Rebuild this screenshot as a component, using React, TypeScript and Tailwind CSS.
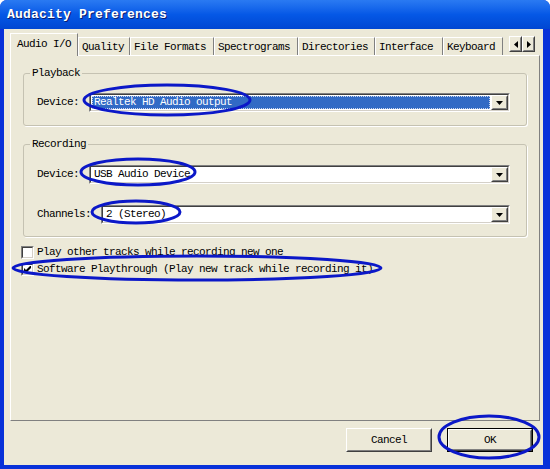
import React from "react";

const tabs = [
  { label: "Audio I/O", w: 68, active: true },
  { label: "Quality", w: 52 },
  { label: "File Formats", w: 84 },
  { label: "Spectrograms", w: 84 },
  { label: "Directories", w: 77 },
  { label: "Interface", w: 68 },
  { label: "Keyboard", w: 60 },
];

function Arrow({ dir }: { dir: "left" | "right" | "down" }) {
  if (dir === "down")
    return (
      <svg width="7" height="4" viewBox="0 0 7 4">
        <path d="M0 0h7L3.5 4z" fill="#000" />
      </svg>
    );
  return (
    <svg width="4" height="7" viewBox="0 0 4 7">
      {dir === "left" ? <path d="M4 0v7L0 3.5z" fill="#000" /> : <path d="M0 0v7l4-3.5z" fill="#000" />}
    </svg>
  );
}

function Raised({ className, children }: { className?: string; children?: React.ReactNode }) {
  return (
    <div className={`border border-t-white border-l-white border-r-[#404040] border-b-[#404040] bg-[#ECE9D8] ${className ?? ""}`}>
      <div className="w-full h-full border border-t-[#ECE9D8] border-l-[#ECE9D8] border-r-[#808080] border-b-[#808080] flex items-center justify-center">
        {children}
      </div>
    </div>
  );
}

function Combo({ value, selected }: { value: string; selected?: boolean }) {
  return (
    <div className="flex-1 h-[19px] border border-t-[#808080] border-l-[#808080] border-r-white border-b-white">
      <div className="h-full border border-t-[#404040] border-l-[#404040] border-r-[#D4D0C8] border-b-[#D4D0C8] bg-white flex items-center">
        <div className="flex-1 h-full p-px flex">
          <div
            className={
              selected
                ? "flex-1 bg-[#316AC5] text-white border border-dotted border-[#c9d6ee] flex items-center pl-px"
                : "flex-1 flex items-center pl-[2px]"
            }
          >
            {value}
          </div>
        </div>
        <Raised className="w-[17px] h-full">
          <Arrow dir="down" />
        </Raised>
      </div>
    </div>
  );
}

function CheckBox({ checked }: { checked?: boolean }) {
  return (
    <div className="w-[13px] h-[13px] border border-t-[#808080] border-l-[#808080] border-r-white border-b-white">
      <div className="w-full h-full border border-t-[#404040] border-l-[#404040] border-r-[#D4D0C8] border-b-[#D4D0C8] bg-white flex items-center justify-center">
        {checked && (
          <svg width="7" height="7" viewBox="0 0 7 7">
            <path d="M0 2v3l2 2 5-5V-1L2 4z" fill="#000" />
          </svg>
        )}
      </div>
    </div>
  );
}

export default function App() {
  return (
    <div className="relative w-[550px] h-[469px] bg-white font-['Liberation_Mono',monospace] text-[11px] tracking-[-0.6px] text-black leading-[13px]">
      <div className="w-[550px] h-[469px] flex flex-col rounded-t-[7px] overflow-hidden bg-[#0831D9]">
        {/* title bar */}
        <div className="h-[29px] flex items-center pl-[7px] bg-gradient-to-b from-[#2A7AF2] via-[#0558E6] to-[#0046D2]">
          <span className="text-white font-bold text-[13px] tracking-[0.2px] [text-shadow:1px_1px_0_#0a1e70]">
            Audacity Preferences
          </span>
        </div>

        {/* client */}
        <div className="ml-[4px] mr-[7px] h-[436px] bg-[#ECE9D8] pt-[4px] pl-[6px] pr-[3px]">
          {/* tabs */}
          <div className="h-[22px] flex items-end">
            {tabs.map((t) =>
              t.active ? (
                <div
                  key={t.label}
                  style={{ width: t.w }}
                  className="relative z-10 h-[23px] -mb-px bg-[#ECE9D8] border-t border-l border-t-white border-l-white border-r border-r-[#808080] pl-[6px] pt-[4px]"
                >
                  {t.label}
                </div>
              ) : (
                <div
                  key={t.label}
                  style={{ width: t.w }}
                  className="h-[18px] border-t border-t-white border-r border-r-[#808080] pl-[4px] pt-[3px] shadow-[inset_1px_0_0_#fff]"
                >
                  {t.label}
                </div>
              )
            )}
            <div className="flex ml-[6px] mb-[3px]">
              <Raised className="w-[13px] h-[16px]">
                <Arrow dir="left" />
              </Raised>
              <Raised className="w-[13px] h-[16px]">
                <Arrow dir="right" />
              </Raised>
            </div>
          </div>

          {/* panel */}
          <div className="h-[366px] border border-t-white border-l-white border-r-[#808080] border-b-[#808080] px-[12px] pt-[11px]">
            <fieldset className="border border-[#c5c2b2] rounded-[3px] pl-[13px] pr-[16px] pt-[13px] pb-[13px] shadow-[1px_1px_0_#fff]">
              <legend className="-ml-[7px] px-[2px]">Playback</legend>
              <div className="flex items-center gap-[10px]">
                <span>Device:</span>
                <Combo value="Realtek HD Audio output" selected />
              </div>
            </fieldset>

            <fieldset className="mt-[12px] border border-[#c5c2b2] rounded-[3px] pl-[13px] pr-[16px] pt-[14px] pb-[12px] shadow-[1px_1px_0_#fff]">
              <legend className="-ml-[7px] px-[2px]">Recording</legend>
              <div className="flex items-center gap-[10px]">
                <span>Device:</span>
                <Combo value="USB Audio Device" />
              </div>
              <div className="flex items-center gap-[10px] mt-[21px]">
                <span>Channels:</span>
                <Combo value="2 (Stereo)" />
              </div>
            </fieldset>

            <div className="mt-[9px] ml-[-2px] flex flex-col gap-[4px]">
              <label className="flex items-center gap-[3px]">
                <CheckBox />
                <span>Play other tracks while recording new one</span>
              </label>
              <label className="flex items-center gap-[3px]">
                <CheckBox checked />
                <span>Software Playthrough (Play new track while recording it)</span>
              </label>
            </div>
          </div>

          {/* buttons */}
          <div className="mt-[7px] flex justify-end gap-[15px] pr-[7px]">
            <Raised className="w-[86px] h-[24px]">Cancel</Raised>
            <div className="border border-black">
              <Raised className="w-[84px] h-[22px]">OK</Raised>
            </div>
          </div>
        </div>
      </div>

      {/* annotation ellipses */}
      <svg className="absolute inset-0 pointer-events-none" width="550" height="469">
        <g fill="none" stroke="#0B18C8" strokeWidth="3">
          <ellipse cx="167" cy="100" rx="83" ry="15" />
          <ellipse cx="138" cy="172" rx="57" ry="13" />
          <ellipse cx="136" cy="212" rx="44" ry="11" />
          <ellipse cx="197" cy="268" rx="184" ry="12" />
          <ellipse cx="489" cy="437" rx="50" ry="21" />
        </g>
      </svg>
    </div>
  );
}
